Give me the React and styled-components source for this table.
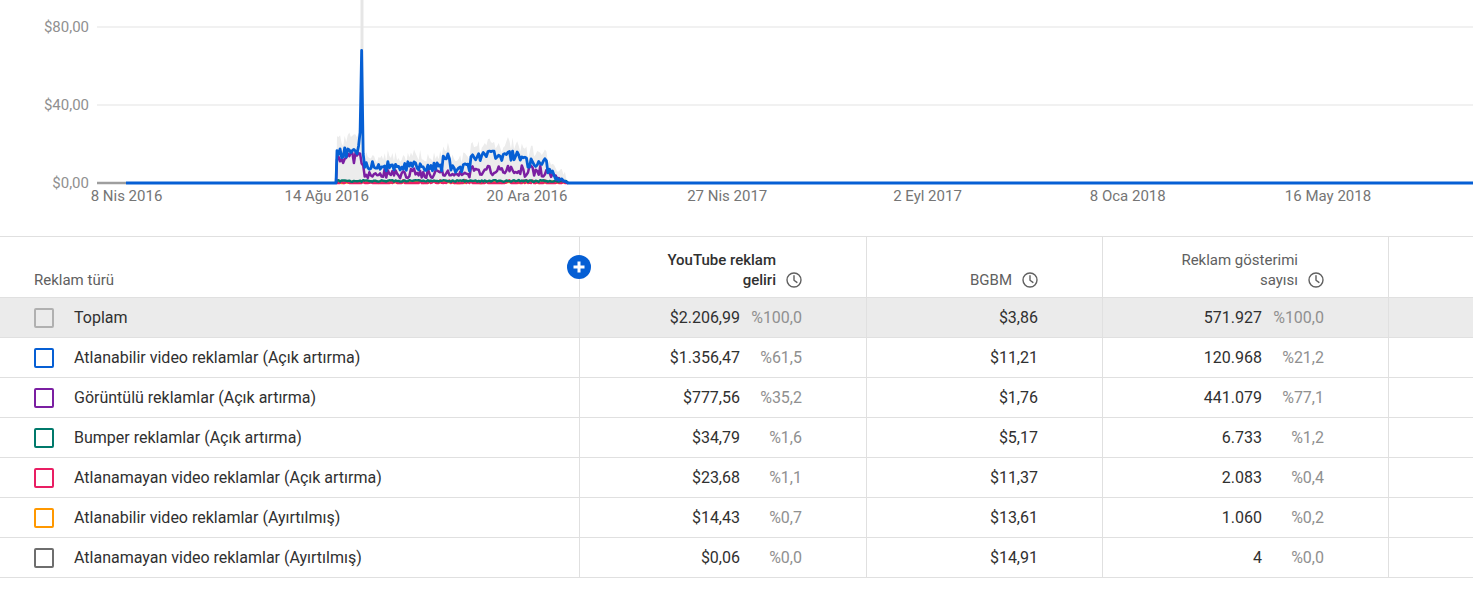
import React from 'react';
import { createGlobalStyle, styled } from 'styled-components';

const GlobalStyle = createGlobalStyle`
    body {
        margin: 0;
        background: #fff;
        font-family: Roboto, 'Noto Sans', Arial, sans-serif;
        color: #282828;
    }
`;

// chart geometry, in page pixels
const CHART_W = 1473;
const CHART_H = 236;
const BASE_Y = 183;
const PX_PER_DOLLAR = 1.95;
const GRID_X = 97;
const DATA_START = 126;
const X_START = 337;
const STEP = 1.54;
const COUNT = 151;
const SPIKE = 16;
const HOVER_X = 362;

const Y_TICKS = ['$0,00', '$40,00', '$80,00'];
const X_TICKS = ['8 Nis 2016', '14 Ağu 2016', '20 Ara 2016', '27 Nis 2017', '2 Eyl 2017', '8 Oca 2018', '16 May 2018'];

const COLORS = {
    total: '#b0b0b0',
    blue: '#065fd4',
    purple: '#7b1fa2',
    green: '#00796b',
    pink: '#e91e63',
    orange: '#ff9800',
    grey: '#6e6e6e',
};

const mulberry32 = (a) => () => {
    a |= 0;
    a = (a + 0x6d2b79f5) | 0;
    let t = Math.imul(a ^ (a >>> 15), 1 | a);
    t = (t + Math.imul(t ^ (t >>> 7), 61 | t)) ^ t;
    return ((t ^ (t >>> 14)) >>> 0) / 4294967296;
};

const buildSeries = () => {
    const r = mulberry32(42);
    const pts = [];
    for (let i = 0; i < COUNT; i++) {
        let blue;
        let purple;
        if (i < SPIKE - 1) {
            blue = 13 + r() * 6;
            purple = 9 + r() * 7;
        } else if (i === SPIKE - 1) {
            blue = 26;
            purple = 15;
        } else if (i === SPIKE) {
            blue = 68;
            purple = 10;
        } else if (i === SPIKE + 1) {
            blue = 15;
            purple = 9;
        } else if (i < 69) {
            blue = 6 + r() * 5;
            purple = 2.5 + r() * 5;
        } else if (i < 74) {
            blue = 10 + r() * 5;
            purple = 3 + r() * 4;
        } else if (i < 87) {
            blue = 5.5 + r() * 4.5;
            purple = 2 + r() * 4;
        } else if (i < 122) {
            blue = 11.5 + r() * 5;
            purple = 4 + r() * 5;
        } else if (i < 137) {
            blue = 8 + r() * 5.5;
            purple = 3 + r() * 6;
        } else {
            const f = Math.max(0, (COUNT - 1 - i) / 14);
            blue = (3 + r() * 6) * f;
            purple = (2 + r() * 5) * f;
        }
        const live = i < COUNT - 1 ? 1 : 0;
        const green = (0.6 + r() * 0.9) * live;
        const pink = r() < 0.3 ? r() * 1.5 * live : 0;
        const orange = r() * 0.8 * live;
        // the grey band hugs the blue line a little above it
        const total = Math.max(blue, purple) + (purple * 0.35 + green + pink + orange) + r() * 3 * live;
        pts.push({ x: X_START + i * STEP, blue, purple, green, pink, orange, total });
    }
    return pts;
};

const yOf = (v) => BASE_Y - v * PX_PER_DOLLAR;

const linePath = (pts, key) =>
    `M${X_START - 1},${BASE_Y} ` + pts.map((p) => `L${p.x.toFixed(2)},${yOf(p[key]).toFixed(2)}`).join(' ');

const SERIES = buildSeries();

const ChartWrap = styled.div`
    height: ${CHART_H}px;
`;

const ChartSvg = styled.svg`
    display: block;
`;

const AxisLabel = styled.text`
    font-family: Roboto, 'Noto Sans', Arial, sans-serif;
    font-size: 15px;
    fill: ${(p) => (p.$axis === 'y' ? '#909090' : '#757575')};
`;

const RevenueChart = () => {
    const lastX = SERIES[SERIES.length - 1].x;
    const area =
        `M${X_START - 1},${BASE_Y} ` +
        SERIES.map((p) => `L${p.x.toFixed(2)},${yOf(p.total).toFixed(2)}`).join(' ') +
        ` L${lastX},${BASE_Y} Z`;

    return (
        <ChartSvg width={CHART_W} height={CHART_H} viewBox={`0 0 ${CHART_W} ${CHART_H}`}>
            {Y_TICKS.map((label, i) => {
                const y = BASE_Y - i * 78;
                return (
                    <g key={label}>
                        {i > 0 && <line x1={GRID_X} x2={CHART_W} y1={y} y2={y} stroke="#e3e3e3" strokeWidth="1.2" />}
                        <AxisLabel $axis="y" x="89" y={y} textAnchor="end" dominantBaseline="central">
                            {label}
                        </AxisLabel>
                    </g>
                );
            })}
            {X_TICKS.map((label, i) => (
                <AxisLabel key={label} $axis="x" x={126.5 + i * 200.25} y="196" textAnchor="middle" dominantBaseline="central">
                    {label}
                </AxisLabel>
            ))}

            <line x1={HOVER_X} x2={HOVER_X} y1="0" y2={BASE_Y} stroke="#e6e6e6" strokeWidth="3" />
            <path d={area} fill="#ececec" />

            <line x1={GRID_X} x2={DATA_START} y1={BASE_Y} y2={BASE_Y} stroke="#9e9e9e" strokeWidth="2.5" />
            <path d={linePath(SERIES, 'orange')} fill="none" stroke={COLORS.orange} strokeWidth="2.4" strokeLinejoin="round" />
            <path d={linePath(SERIES, 'pink')} fill="none" stroke={COLORS.pink} strokeWidth="2.4" strokeLinejoin="round" />
            <path d={linePath(SERIES, 'green')} fill="none" stroke={COLORS.green} strokeWidth="2.4" strokeLinejoin="round" />
            <path d={linePath(SERIES, 'purple')} fill="none" stroke={COLORS.purple} strokeWidth="2.5" strokeLinejoin="round" />
            <path
                d={`M${DATA_START},${BASE_Y} ${linePath(SERIES, 'blue').replace('M', 'L')} L${lastX + 1},${BASE_Y} L${CHART_W},${BASE_Y}`}
                fill="none"
                stroke={COLORS.blue}
                strokeWidth="2.8"
                strokeLinejoin="round"
            />
        </ChartSvg>
    );
};

const ROWS = [
    { name: 'Toplam', color: COLORS.total, revenue: '$2.206,99', revShare: '%100,0', cpm: '$3,86', imps: '571.927', impShare: '%100,0', total: true },
    { name: 'Atlanabilir video reklamlar (Açık artırma)', color: COLORS.blue, revenue: '$1.356,47', revShare: '%61,5', cpm: '$11,21', imps: '120.968', impShare: '%21,2' },
    { name: 'Görüntülü reklamlar (Açık artırma)', color: COLORS.purple, revenue: '$777,56', revShare: '%35,2', cpm: '$1,76', imps: '441.079', impShare: '%77,1' },
    { name: 'Bumper reklamlar (Açık artırma)', color: COLORS.green, revenue: '$34,79', revShare: '%1,6', cpm: '$5,17', imps: '6.733', impShare: '%1,2' },
    { name: 'Atlanamayan video reklamlar (Açık artırma)', color: COLORS.pink, revenue: '$23,68', revShare: '%1,1', cpm: '$11,37', imps: '2.083', impShare: '%0,4' },
    { name: 'Atlanabilir video reklamlar (Ayırtılmış)', color: COLORS.orange, revenue: '$14,43', revShare: '%0,7', cpm: '$13,61', imps: '1.060', impShare: '%0,2' },
    { name: 'Atlanamayan video reklamlar (Ayırtılmış)', color: COLORS.grey, revenue: '$0,06', revShare: '%0,0', cpm: '$14,91', imps: '4', impShare: '%0,0' },
];

const Table = styled.div`
    border-top: 1px solid #e0e0e0;
`;

const Row = styled.div`
    display: grid;
    grid-template-columns: 580px 287px 236px 286px 1fr;
    height: ${(p) => (p.$header ? 61 : 40)}px;
    box-sizing: border-box;
    border-bottom: 1px solid #e0e0e0;
    background: ${(p) => (p.$total ? '#ebebeb' : 'transparent')};
`;

const Cell = styled.div`
    display: flex;
    align-items: center;
    justify-content: flex-end;
    padding-right: 64px;
    border-right: 1px solid #e0e0e0;
    font-size: 16px;
    color: #303030;
    white-space: nowrap;

    &:last-child {
        border-right: none;
        padding-right: 0;
    }
`;

const NameCell = styled(Cell)`
    justify-content: flex-start;
    gap: 20px;
    padding: 0 0 0 34px;
`;

const HeaderCell = styled(Cell)`
    position: relative;
    align-items: flex-end;
    padding-bottom: 7px;
    font-size: 15px;
    color: #606060;
`;

const HeaderNameCell = styled(HeaderCell)`
    justify-content: flex-start;
    padding-left: 34px;
    padding-right: 0;
    line-height: 20px;
`;

const HeaderLabel = styled.span`
    max-width: 125px;
    text-align: right;
    white-space: normal;
    line-height: 20px;
    font-weight: ${(p) => (p.$sorted ? 500 : 400)};
    color: ${(p) => (p.$sorted ? '#303030' : '#606060')};
`;

const IconSlot = styled.span`
    display: flex;
    align-items: center;
    height: 20px;
    margin-left: 10px;
`;

const Checkbox = styled.span`
    width: 20px;
    height: 20px;
    box-sizing: border-box;
    border: 2px solid ${(p) => p.$color};
    border-radius: 2px;
    flex: none;
`;

const Share = styled.span`
    width: 52px;
    margin-left: 10px;
    text-align: right;
    color: #909090;
`;

const AddButton = styled.button`
    position: absolute;
    top: 18px;
    right: -12px;
    width: 24px;
    height: 24px;
    padding: 0;
    border: none;
    background: none;
    cursor: pointer;
    display: block;

    & > svg {
        display: block;
    }
`;

const ClockIcon = () => (
    <svg width="16" height="16" viewBox="0 0 16 16" fill="none" stroke="#606060" strokeWidth="1.4">
        <circle cx="8" cy="8" r="7" />
        <polyline points="8,3.8 8,8.2 10.9,10.4" strokeLinecap="round" strokeLinejoin="round" />
    </svg>
);

const PlusIcon = () => (
    <svg width="24" height="24" viewBox="0 0 24 24">
        <circle cx="12" cy="12" r="12" fill="#065fd4" />
        <path d="M12 6.5v11M6.5 12h11" stroke="#fff" strokeWidth="3" />
    </svg>
);

const MetricHeader = ({ children, sorted }) => (
    <HeaderCell>
        <HeaderLabel $sorted={sorted}>{children}</HeaderLabel>
        <IconSlot>
            <ClockIcon />
        </IconSlot>
    </HeaderCell>
);

export default function App() {
    return (
        <>
            <GlobalStyle />
            <ChartWrap>
                <RevenueChart />
            </ChartWrap>
            <Table>
                <Row $header>
                    <HeaderNameCell>
                        Reklam türü
                        <AddButton aria-label="Metrik ekle">
                            <PlusIcon />
                        </AddButton>
                    </HeaderNameCell>
                    <MetricHeader sorted>YouTube reklam geliri</MetricHeader>
                    <MetricHeader>BGBM</MetricHeader>
                    <MetricHeader>Reklam gösterimi sayısı</MetricHeader>
                    <HeaderCell />
                </Row>
                {ROWS.map((row) => (
                    <Row key={row.name} $total={row.total}>
                        <NameCell>
                            <Checkbox $color={row.color} />
                            {row.name}
                        </NameCell>
                        <Cell>
                            {row.revenue}
                            <Share>{row.revShare}</Share>
                        </Cell>
                        <Cell>{row.cpm}</Cell>
                        <Cell>
                            {row.imps}
                            <Share>{row.impShare}</Share>
                        </Cell>
                        <Cell />
                    </Row>
                ))}
            </Table>
        </>
    );
}
